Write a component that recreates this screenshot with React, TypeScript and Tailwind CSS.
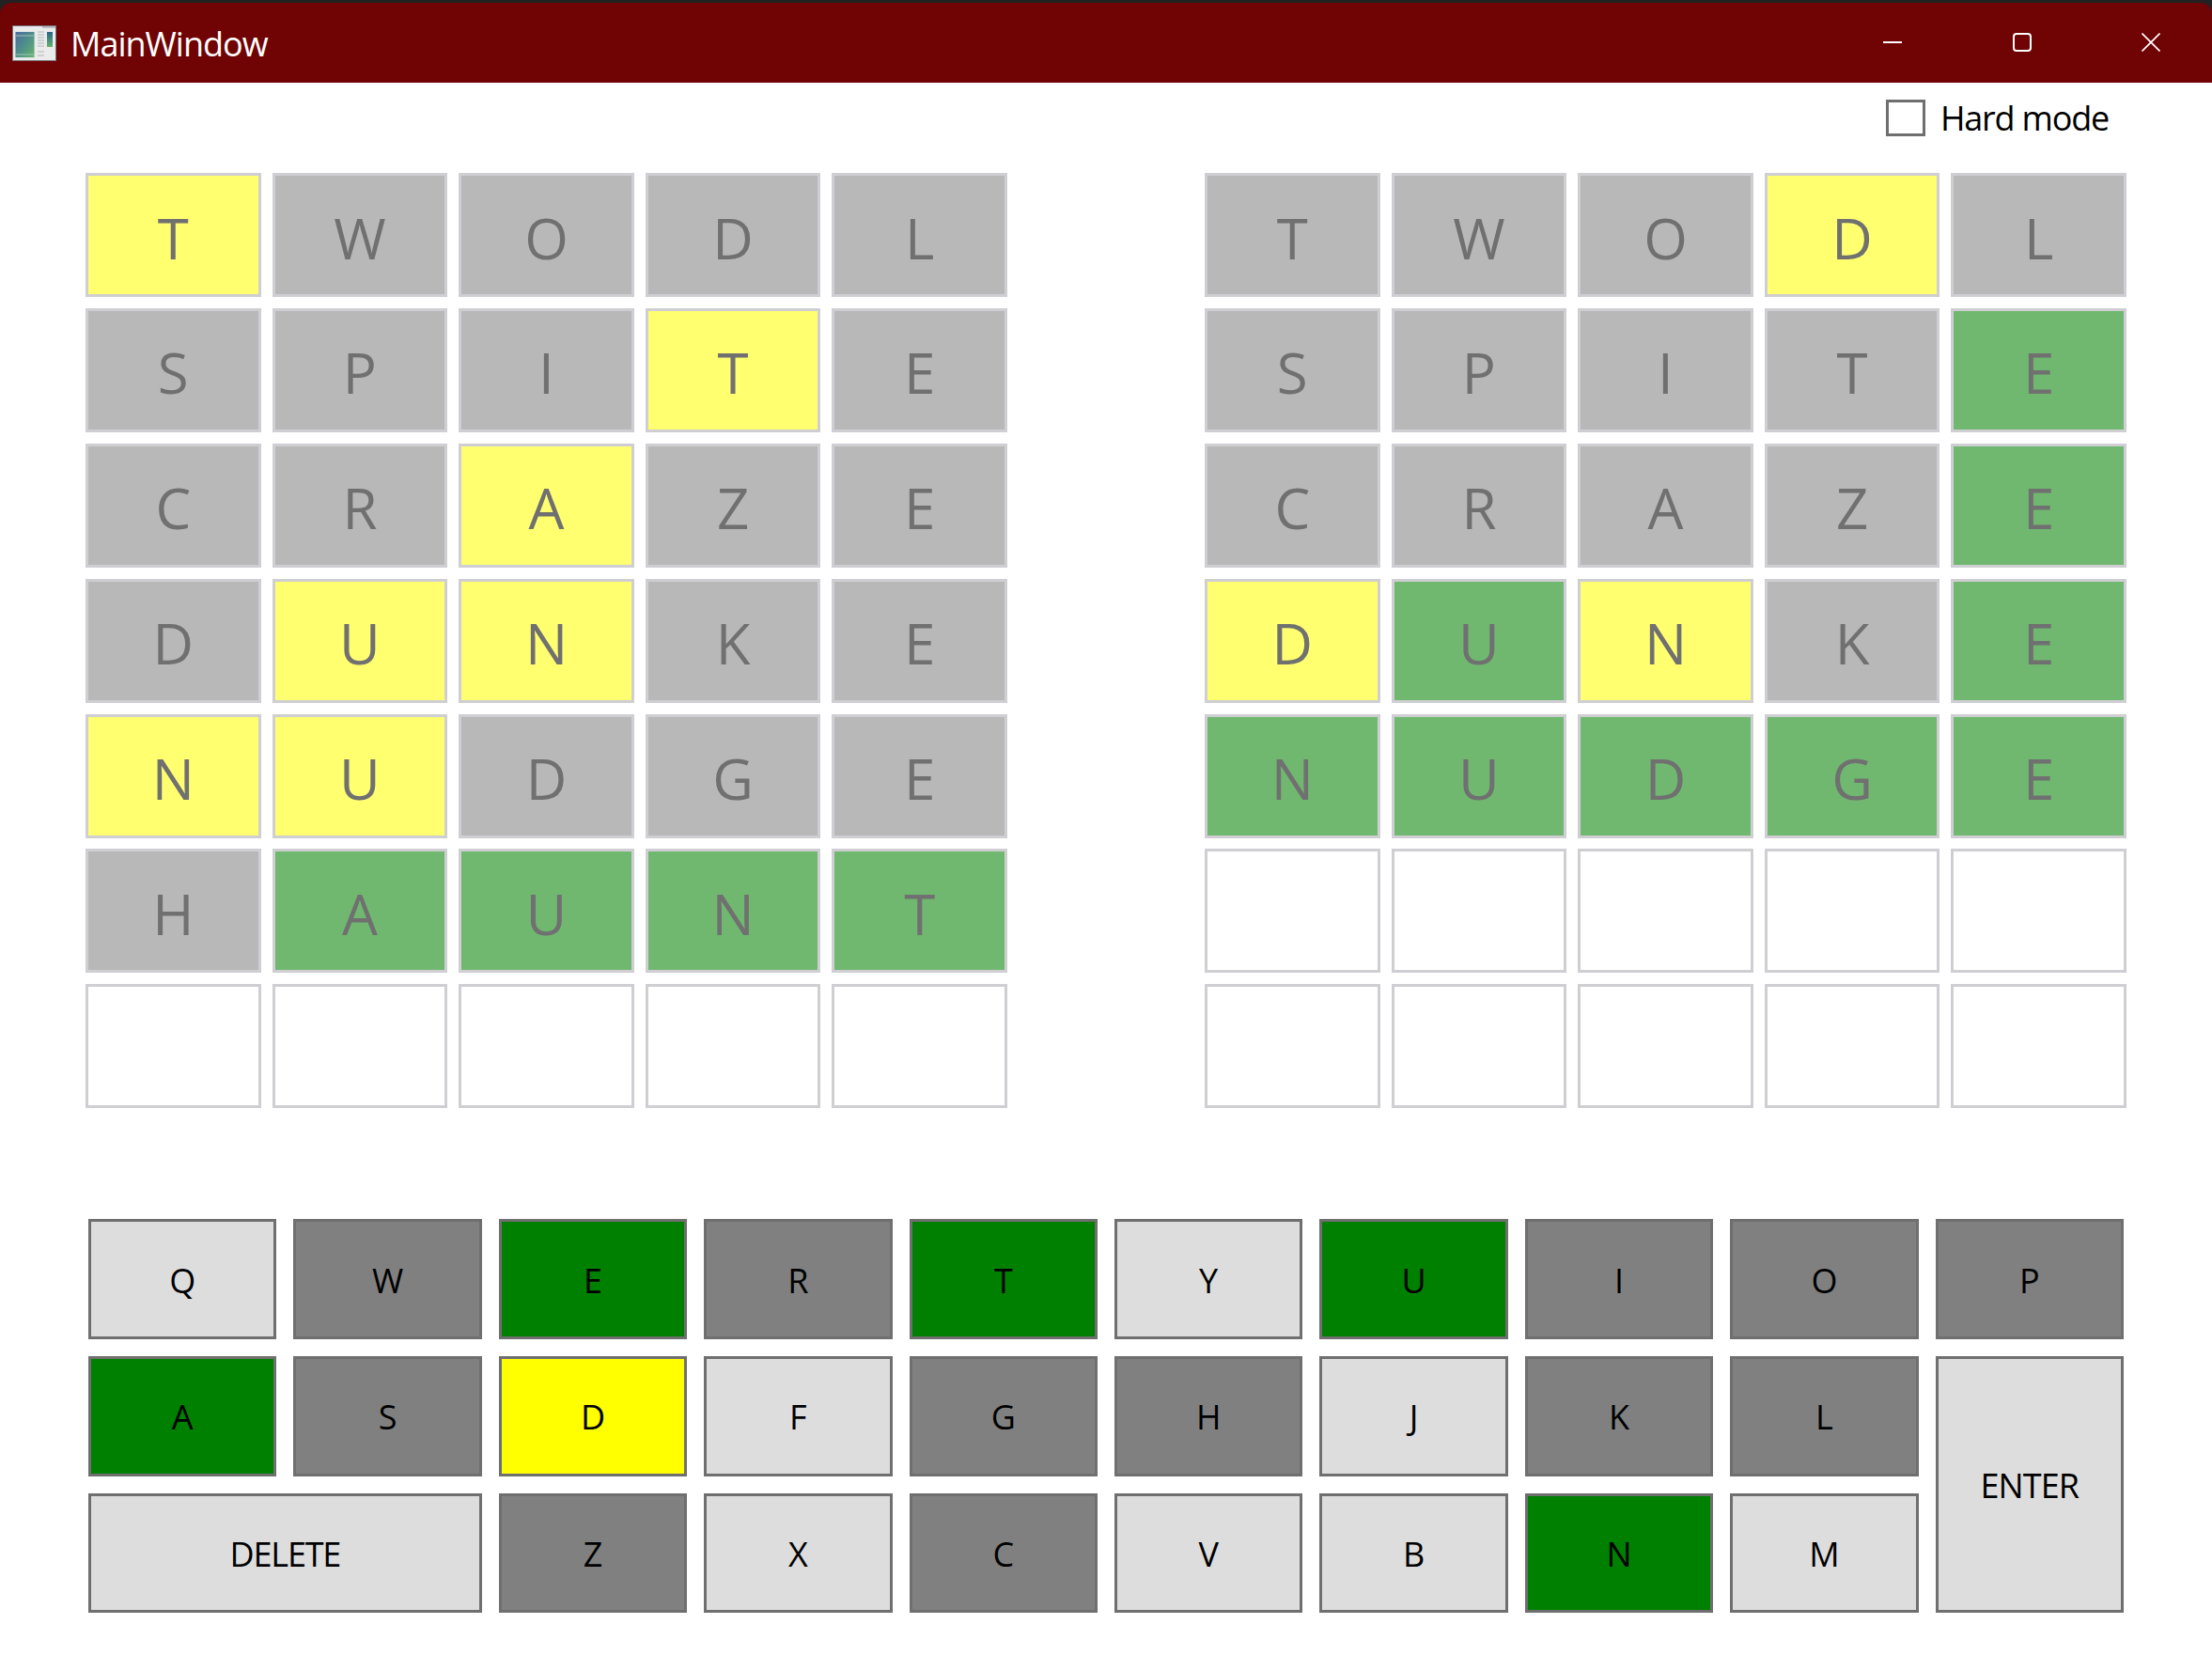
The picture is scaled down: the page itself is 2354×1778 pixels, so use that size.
const tileStyles: Record<string, string> = {
  y: "bg-[#ffff70]",
  x: "bg-[#b8b8b8]",
  g: "bg-[#70b870]",
  e: "bg-white",
};

const keyStyles: Record<string, string> = {
  n: "bg-[#dddddd]",
  x: "bg-[#808080]",
  g: "bg-[#008000]",
  y: "bg-[#ffff00]",
};

const leftBoard = [
  ["TWODL", "yxxxx"],
  ["SPITE", "xxxyx"],
  ["CRAZE", "xxyxx"],
  ["DUNKE", "xyyxx"],
  ["NUDGE", "yyxxx"],
  ["HAUNT", "xgggg"],
  ["     ", "eeeee"],
];

const rightBoard = [
  ["TWODL", "xxxyx"],
  ["SPITE", "xxxxg"],
  ["CRAZE", "xxxxg"],
  ["DUNKE", "ygyxg"],
  ["NUDGE", "ggggg"],
  ["     ", "eeeee"],
  ["     ", "eeeee"],
];

const keys = [
  ["Q", "n", ""], ["W", "x", ""], ["E", "g", ""], ["R", "x", ""], ["T", "g", ""],
  ["Y", "n", ""], ["U", "g", ""], ["I", "x", ""], ["O", "x", ""], ["P", "x", ""],
  ["A", "g", ""], ["S", "x", ""], ["D", "y", ""], ["F", "n", ""], ["G", "x", ""],
  ["H", "x", ""], ["J", "n", ""], ["K", "x", ""], ["L", "x", ""],
  ["ENTER", "n", "row-span-2 tracking-[-0.9px]"],
  ["DELETE", "n", "col-span-2 tracking-[-1.2px]"],
  ["Z", "x", ""], ["X", "n", ""], ["C", "x", ""], ["V", "n", ""], ["B", "n", ""],
  ["N", "g", ""], ["M", "n", ""],
];

const Board = ({ rows }: { rows: string[][] }) => {
  return (
    <div className="grid w-[981px] grid-cols-5 gap-x-[12px] gap-y-[11.9px]">
      {rows.flatMap(([word, states], r) =>
        word.split("").map((letter, c) => (
          <div
            key={`${r}-${c}`}
            className={`flex h-[132px] items-center justify-center border-[3px] border-[#cfcfd3] pt-[5px] text-[60px] leading-none text-[#707070] ${tileStyles[states[c]]}`}
          >
            {letter.trim()}
          </div>
        )),
      )}
    </div>
  );
};

const AppIcon = () => {
  return (
    <svg width="47" height="38" viewBox="0 0 47 38">
      <defs>
        <linearGradient id="pane" x1="0" y1="0" x2="1" y2="1">
          <stop offset="0" stopColor="#4c6aa0" />
          <stop offset="0.5" stopColor="#4f8f8a" />
          <stop offset="1" stopColor="#66b56d" />
        </linearGradient>
        <linearGradient id="strip" x1="0" y1="0" x2="0" y2="1">
          <stop offset="0" stopColor="#2a6488" />
          <stop offset="1" stopColor="#66b56d" />
        </linearGradient>
      </defs>
      <rect x="0.5" y="0.5" width="46" height="37" fill="#ebebeb" stroke="#77777c" />
      <rect x="32" y="1" width="14" height="2" fill="#bdbdbd" />
      <rect x="2.5" y="6" width="22" height="29" fill="#dde8e4" />
      <rect x="3.5" y="7" width="20" height="27" fill="url(#pane)" />
      <path d="M4 11h19M4 31h19" stroke="#9fc4b5" strokeWidth="1" />
      <rect x="37" y="7" width="6" height="16" fill="url(#strip)" />
      <path
        d="M27 7h7M27 10h7M27 13h7M27 16h7M27 19h7M27 22h7M27 28h7M27 32h7"
        stroke="#b5b5b5"
        strokeWidth="1.2"
      />
    </svg>
  );
};

export default function App() {
  return (
    <div className="flex h-[1778px] w-[2354px] flex-col overflow-hidden bg-[#222222] pt-[3px] font-['Open_Sans',sans-serif]">
      {/* Title bar */}
      <div className="flex h-[85px] shrink-0 items-center rounded-t-[12px] bg-[#700303] text-white">
        <div className="ml-[13px] flex items-center">
          <AppIcon />
        </div>
        <span className="ml-[15px] pt-[2px] text-[36px] leading-none tracking-[-1px]">MainWindow</span>
        <div className="mb-[1px] ml-auto mr-[55px] flex items-center gap-[117.5px]">
          <svg width="20" height="20" viewBox="0 0 20 20" fill="none" stroke="#fff" strokeWidth="2">
            <path d="M0 10h20" />
          </svg>
          <svg width="20" height="20" viewBox="0 0 20 20" fill="none" stroke="#fff" strokeWidth="2">
            <rect x="1" y="1" width="18" height="18" rx="3" />
          </svg>
          <svg width="20" height="20" viewBox="0 0 20 20" fill="none" stroke="#fff" strokeWidth="1.6">
            <path d="M0.5 0.5l19 19M19.5 0.5l-19 19" />
          </svg>
        </div>
      </div>

      <div className="flex flex-1 flex-col bg-white">
        {/* Hard mode toggle */}
        <div className="flex h-[96px] shrink-0 items-start justify-end pr-[110px] pt-[18px]">
          <label className="flex items-center gap-[16px] text-[36px] leading-[39px] tracking-[-1.2px] text-black">
            <span className="h-[39px] w-[42px] border-[3px] border-[#6f6f6f] bg-white" />
            Hard mode
          </label>
        </div>

        {/* Boards */}
        <div className="flex gap-[210px] pl-[91px]">
          <Board rows={leftBoard} />
          <Board rows={rightBoard} />
        </div>

        {/* Keyboard */}
        <div className="mx-[94px] mt-[118px] grid h-[419px] grid-cols-10 grid-rows-3 gap-[18px]">
          {keys.map(([label, state, span]) => (
            <div
              key={label}
              className={`flex items-center justify-center border-[3px] border-[#6f6f6f] pt-[3px] text-[36px] leading-none text-black ${keyStyles[state]} ${span}`}
            >
              {label}
            </div>
          ))}
        </div>
      </div>
    </div>
  );
}
